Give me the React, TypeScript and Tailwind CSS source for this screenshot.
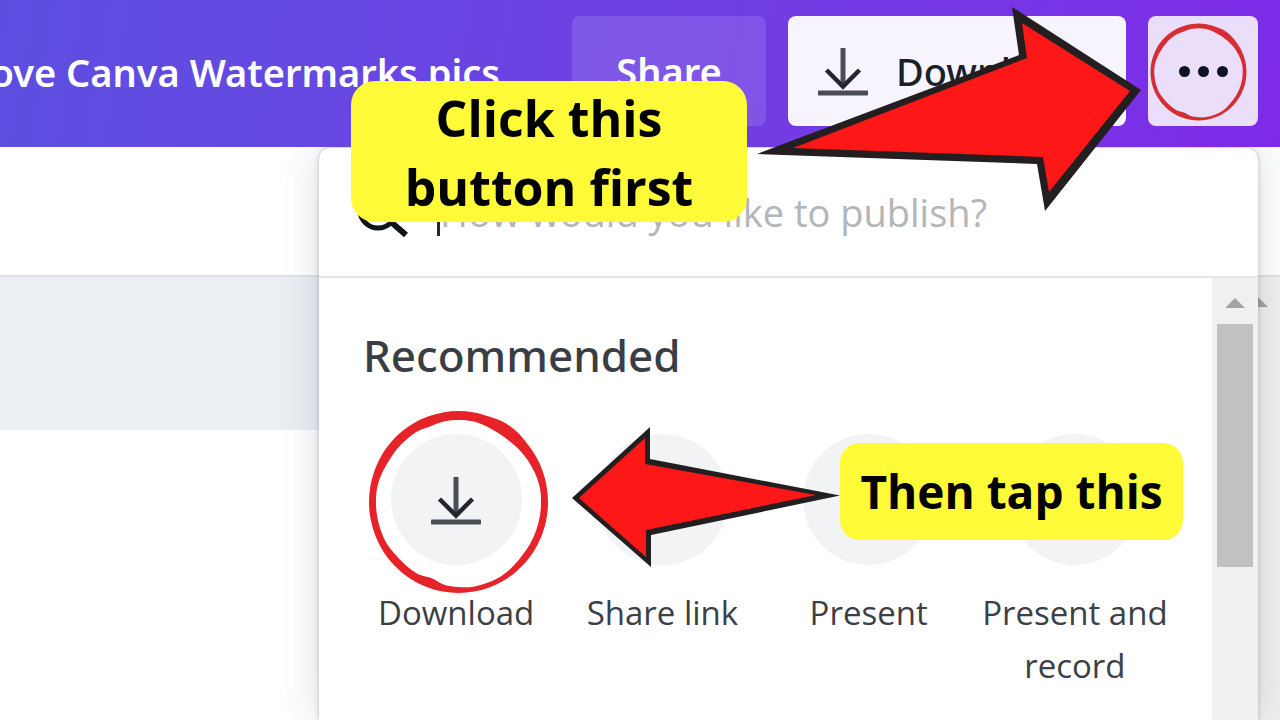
import * as React from "react";

type Point = [number, number];

// closed Catmull-Rom curve through the given points
function smooth(pts: Point[]) {
  const n = pts.length;
  let d = `M${pts[0][0]} ${pts[0][1]}`;
  for (let i = 0; i < n; i++) {
    const a = pts[(i - 1 + n) % n];
    const b = pts[i];
    const c = pts[(i + 1) % n];
    const e = pts[(i + 2) % n];
    d += `C${b[0] + (c[0] - a[0]) / 6} ${b[1] + (c[1] - a[1]) / 6} ${c[0] - (e[0] - b[0]) / 6} ${c[1] - (e[1] - b[1]) / 6} ${c[0]} ${c[1]}`;
  }
  return d + "Z";
}

// brush stroke, every 10 degrees clockwise from the top: [outer bump, thickness]
const STROKE: Point[] = [
  [0, 9], [0, 9], [0, 10], [1, 12], [1, 12], [0, 10], [0, 9], [0, 8], [0, 7],
  [0, 7], [0, 7], [0, 7], [0, 7], [0, 7], [0, 6], [0, 5], [0, 5], [0, 5],
  [0, 6], [0, 7], [0, 10], [0, 8], [0, 8], [0, 8], [0, 7], [0, 7], [0, 7],
  [0, 7], [0, 7], [0, 8], [0, 9], [0, 9], [0, 9], [0, 9], [0, 10], [0, 9],
];

function edge(offset: (bump: number, thick: number) => number) {
  return smooth(
    STROKE.map(([bump, thick], i) => {
      const angle = (i * Math.PI) / 18;
      const r = offset(bump, thick);
      return [91 + (90 + r) * Math.sin(angle), 92 - (91 + r) * Math.cos(angle)];
    }),
  );
}

const RING_PATH = edge((bump) => bump) + edge((bump, thick) => bump - thick);

function Ring({ className }: { className: string }) {
  return (
    <svg
      viewBox="0 0 182 184"
      preserveAspectRatio="none"
      className={className}
      aria-hidden="true"
    >
      <path d={RING_PATH} fillRule="evenodd" />
    </svg>
  );
}

function DownloadIcon() {
  return (
    <svg viewBox="0 0 50 50" className="size-[50px] shrink-0" fill="none" aria-hidden="true">
      <path d="M25 2v38" stroke="#4a4e54" strokeWidth="5" />
      <path d="M8.500 24 25 40.500 41.500 24" stroke="#24282e" strokeWidth="4.500" />
      <path d="M1 47h48" stroke="#4a4e54" strokeWidth="5" strokeLinecap="round" />
    </svg>
  );
}

function LinkIcon() {
  return (
    <svg viewBox="0 0 24 24" className="size-9" fill="none" stroke="#24282e" strokeWidth="2" strokeLinecap="round" aria-hidden="true">
      <path d="M10 13a5 5 0 0 0 7.500.500l3-3a5 5 0 0 0-7-7l-1.700 1.700" />
      <path d="M14 11a5 5 0 0 0-7.500-.500l-3 3a5 5 0 0 0 7 7l1.700-1.700" />
    </svg>
  );
}

function PresentIcon() {
  return (
    <svg viewBox="0 0 56 48" className="h-12 w-14" fill="none" stroke="#24282e" strokeWidth="4" aria-hidden="true">
      <rect x="2" y="4" width="52" height="38" rx="3" />
      <path d="M24 16v14l11-7z" fill="#24282e" stroke="none" />
    </svg>
  );
}

function RecordIcon() {
  return (
    <svg viewBox="0 0 48 48" className="size-12" fill="none" stroke="#24282e" strokeWidth="4" aria-hidden="true">
      <circle cx="24" cy="24" r="20" />
      <circle cx="24" cy="24" r="7" fill="#24282e" stroke="none" />
    </svg>
  );
}

const OPTIONS = [
  { label: "Download", Icon: DownloadIcon },
  { label: "Share link", Icon: LinkIcon },
  { label: "Present", Icon: PresentIcon },
  { label: "Present and record", Icon: RecordIcon },
];

function ScrollArrow() {
  return (
    <svg viewBox="0 0 20 10" className="h-[10px] w-5" aria-hidden="true">
      <path d="M0 10 10 0l10 10z" fill="#a3a3a3" />
    </svg>
  );
}

function Header() {
  return (
    <header className="relative z-20 flex h-[147px] items-start gap-[22px] bg-linear-100 from-[#5c4fe0] to-[#7d2ae7] pt-4 pr-[22px] font-['Noto_Sans',sans-serif]">
      <div className="flex h-[112px] min-w-0 flex-1 items-center justify-end overflow-hidden pr-[50px]">
        <h1 className="text-[38px] leading-[48px] font-semibold whitespace-nowrap text-white">
          ove Canva Watermarks pics
        </h1>
      </div>
      <button className="h-[110px] w-[194px] shrink-0 rounded-lg bg-white/12 text-[38px] font-semibold text-white">
        Share
      </button>
      <button className="flex h-[110px] w-[338px] shrink-0 items-center gap-7 rounded-lg bg-[#f7f4fe] pl-[30px] text-[38px] font-medium text-[#1b1f27]">
        <DownloadIcon />
        Download
      </button>
      <button
        aria-label="More"
        className="flex size-[110px] shrink-0 items-center justify-center gap-2 rounded-lg bg-[#eadefa]"
      >
        <span className="size-[11px] rounded-full bg-[#0e1320]" />
        <span className="size-[11px] rounded-full bg-[#0e1320]" />
        <span className="size-[11px] rounded-full bg-[#0e1320]" />
      </button>
    </header>
  );
}

function PublishMenu() {
  return (
    <section className="absolute top-[148px] right-[22px] bottom-0 z-10 flex w-[939px] flex-col rounded-t-xl bg-white shadow-[0_0_4px_rgba(57,76,96,0.3),0_0_40px_rgba(57,76,96,0.2)]">
      <div className="flex h-[130px] items-center border-b-2 border-[#e4e5e7] pl-9">
        <svg viewBox="0 0 54 54" className="size-[54px] shrink-0" fill="none" stroke="#101317" strokeWidth="5" aria-hidden="true">
          <circle cx="23" cy="25" r="18" />
          <path d="M36 37l15 13" strokeWidth="6" />
        </svg>
        <span className="ml-7 h-12 w-[3px] bg-[#24282e]" />
        <input
          type="text"
          aria-label="How would you like to publish?"
          placeholder="How would you like to publish?"
          className="w-[600px] bg-transparent text-[38px] text-[#24282e] outline-none placeholder:text-[#b3b5b8]"
        />
      </div>
      <div className="flex min-h-0 flex-1 overflow-hidden">
        <div className="flex-1 px-[34px] pt-12">
          <h2 className="pl-[10px] font-['Noto_Sans',sans-serif] text-[44px] leading-[58px] font-medium text-[#3a3e44]">
            Recommended
          </h2>
          <ul className="mt-[50px] grid grid-cols-4">
            {OPTIONS.map(({ label, Icon }) => (
              <li key={label}>
                <button className="flex w-full flex-col items-center gap-[21px]">
                  <span className="grid size-[131px] place-items-center rounded-full bg-[#f1f3f5]">
                    <Icon />
                  </span>
                  <span className="text-[33px] leading-[53px] text-[#3c4046]">{label}</span>
                </button>
              </li>
            ))}
          </ul>
        </div>
        <div className="flex w-[46px] flex-col items-center bg-[#f0f0f0] pt-5">
          <ScrollArrow />
          <div className="mt-4 h-[243px] w-9 bg-[#c1c1c1]" />
        </div>
      </div>
    </section>
  );
}

function Annotations() {
  return (
    <>
      <Ring className="absolute top-[23px] right-[33px] z-30 h-[98px] w-[97px] fill-[#d62d35]" />
      <Ring className="absolute top-[410px] right-[731px] z-30 h-[184px] w-[181px] fill-[#e62329]" />
      <svg viewBox="0 0 385 205" className="absolute top-[7px] right-[139px] z-30 h-[205px] w-[385px]" aria-hidden="true">
        <path d="M1 147 263 48 256 0 385 83 289 204 281 157z" fill="#231f20" />
        <path d="M37 141 271 51 266 16 374 84 293 185 287 150z" fill="#fd1717" />
      </svg>
      <svg viewBox="0 0 268 140" className="absolute top-[427px] right-[440px] z-30 h-[140px] w-[268px]" aria-hidden="true">
        <path d="M0 71 78 0v32l190 36.500L79 108v32z" fill="#231f20" />
        <path d="M7 71 73 11v26l171 31L74 103v27z" fill="#fd1717" />
      </svg>
      <p className="absolute top-[81px] right-[533px] z-30 w-[396px] rounded-3xl bg-[#fffb38] px-10 pt-[3px] text-center text-[50px] leading-[69px] font-bold text-black">
        Click this button first
      </p>
      <p className="absolute top-[443px] right-[97px] z-30 w-[343px] rounded-[20px] bg-[#fffb38] text-center text-[46px] leading-[97px] font-bold whitespace-nowrap text-black">
        Then tap this
      </p>
    </>
  );
}

export default function App() {
  return (
    <div className="relative flex min-h-screen flex-col overflow-hidden bg-white font-['Open_Sans','Noto_Sans',sans-serif]">
      <Header />
      <main className="flex flex-1 flex-col">
        <div className="h-[130px] border-b-2 border-[#e0e3e6]" />
        <div className="flex flex-1">
          <div className="flex-1">
            <div className="h-[153px] bg-[#ebeff3]" />
          </div>
          <div className="flex w-11 flex-col items-center bg-[#f0f0f0] pt-5">
            <ScrollArrow />
          </div>
        </div>
      </main>
      <PublishMenu />
      <Annotations />
    </div>
  );
}
